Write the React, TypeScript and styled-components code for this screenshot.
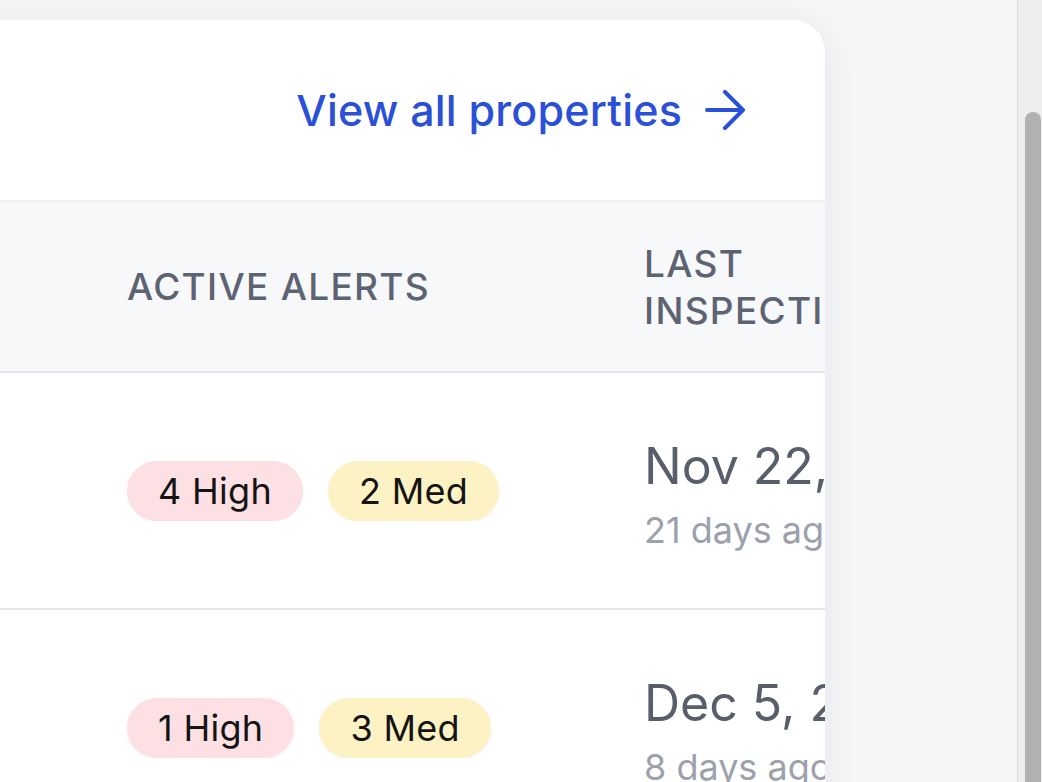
import React from 'react';
import styled, { createGlobalStyle } from 'styled-components';

const GlobalStyle = createGlobalStyle`
  html, body {
    margin: 0;
    height: 100%;
  }
  body {
    background: #f5f6f8;
    font-family: Inter, "Noto Sans", "Liberation Sans", sans-serif;
    overflow: hidden;
  }
  * {
    box-sizing: border-box;
  }
`;

const columns = '400px 517px 376px 320px';

const Screen = styled.div`
  display: flex;
  height: 100vh;
  overflow: hidden;
`;

const Viewport = styled.main`
  flex: 1;
  min-width: 0;
  padding: 20px 192px 0 0;
  overflow: hidden;
  background: #f5f6f8;
`;

const Card = styled.section`
  margin-left: -321px;
  background: #fff;
  border-radius: 32px;
  box-shadow: 0 4px 32px rgba(17, 24, 39, 0.07);
  overflow: hidden;
`;

const CardHeader = styled.header`
  display: flex;
  align-items: center;
  justify-content: space-between;
  height: 180px;
  padding: 0 80px 0 48px;
`;

const Title = styled.h2`
  margin: 0;
  font-size: 40px;
  font-weight: 600;
  color: #111827;
`;

const ViewAll = styled.a`
  display: flex;
  align-items: center;
  gap: 23px;
  font-size: 43px;
  font-weight: 500;
  letter-spacing: 0.2px;
  color: #2b50d8;
  text-decoration: none;
`;

const HeadRow = styled.div`
  display: grid;
  grid-template-columns: ${columns};
  align-items: center;
  height: 173px;
  background: #f7f8fa;
  border-top: 2px solid #eef0f3;
  border-bottom: 2px solid #e3e4e9;
`;

const HeadCell = styled.div`
  padding: 0 48px;
  font-size: 37px;
  font-weight: 500;
  line-height: 47px;
  letter-spacing: 0.035em;
  text-transform: uppercase;
  color: #5d6372;
  overflow: hidden;
`;

const Row = styled.div`
  display: grid;
  grid-template-columns: ${columns};
  align-items: center;
  height: 237px;
  border-bottom: 2px solid #e4e5ea;
`;

const Cell = styled.div<{ $shift?: number }>`
  padding: ${p => p.$shift ?? 0}px 48px 0;
  overflow: hidden;
`;

const Name = styled.div`
  font-size: 36px;
  color: #111827;
  white-space: nowrap;
`;

const Badges = styled.div`
  display: flex;
  gap: 25px;
`;

const tones = {
  high: '#fde0e3',
  med: '#fdf2c4',
};

const Badge = styled.span<{ $tone: keyof typeof tones }>`
  display: inline-flex;
  align-items: center;
  height: 60px;
  padding: 0 31px;
  border-radius: 30px;
  background: ${p => tones[p.$tone]};
  box-shadow: 0 1px 3px rgba(0, 0, 0, 0.05);
  font-size: 36px;
  letter-spacing: 0.3px;
  color: #141414;
  white-space: nowrap;
`;

const DateText = styled.div`
  font-size: 50px;
  line-height: 60px;
  color: #595e6b;
  white-space: nowrap;
`;

const Ago = styled.div`
  margin-top: 10px;
  font-size: 36px;
  line-height: 48px;
  color: #9ca1ac;
  white-space: nowrap;
`;

const Track = styled.div`
  width: 25px;
  flex: none;
  display: flex;
  padding: 112px 1px 0 7px;
  background: #ededed;
  border-left: 1px solid #d9d9d9;
`;

const Thumb = styled.div`
  width: 16px;
  background: #b1b1b1;
  border-radius: 8px 8px 0 0;
`;

const ArrowRight = () => (
  <svg width="40" height="40" viewBox="0 0 40 40" fill="none" stroke="currentColor" strokeWidth="4" strokeLinecap="round" strokeLinejoin="round">
    <path d="M2 20h36M20 2l18 18-18 18" />
  </svg>
);

const properties = [
  { name: 'Maple Court', high: 4, med: 2, date: 'Nov 22, 2024', ago: '21 days ago', status: 'Active' },
  { name: 'Oak Ridge', high: 1, med: 3, date: 'Dec 5, 2024', ago: '8 days ago', status: 'Active' },
];

export default function App() {
  return (
    <>
      <GlobalStyle />
      <Screen>
        <Viewport>
          <Card>
            <CardHeader>
              <Title>Properties</Title>
              <ViewAll href="#">
                View all properties
                <ArrowRight />
              </ViewAll>
            </CardHeader>
            <HeadRow>
              <HeadCell>Property</HeadCell>
              <HeadCell>Active Alerts</HeadCell>
              <HeadCell>Last Inspection</HeadCell>
              <HeadCell>Status</HeadCell>
            </HeadRow>
            {properties.map(p => (
              <Row key={p.name}>
                <Cell>
                  <Name>{p.name}</Name>
                </Cell>
                <Cell>
                  <Badges>
                    <Badge $tone="high">{p.high} High</Badge>
                    <Badge $tone="med">{p.med} Med</Badge>
                  </Badges>
                </Cell>
                <Cell $shift={8}>
                  <DateText>{p.date}</DateText>
                  <Ago>{p.ago}</Ago>
                </Cell>
                <Cell>
                  <Name>{p.status}</Name>
                </Cell>
              </Row>
            ))}
          </Card>
        </Viewport>
        <Track>
          <Thumb />
        </Track>
      </Screen>
    </>
  );
}
